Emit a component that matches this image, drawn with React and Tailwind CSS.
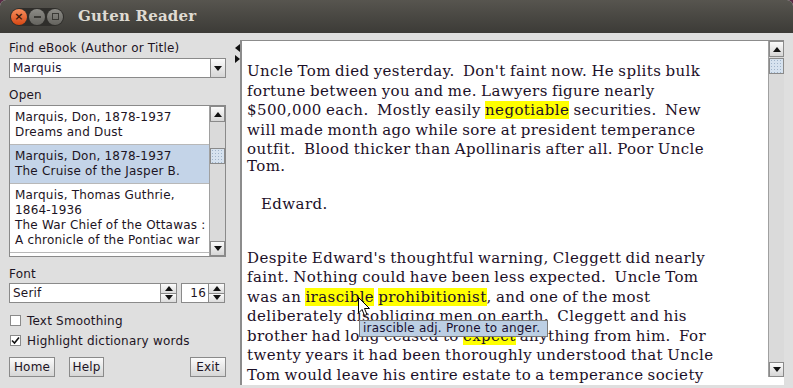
import React from "react";

// small arrow glyphs used by scrollbars, spinners and the combo box
const Up = () => (
  <svg width="8" height="5" viewBox="0 0 8 5"><path d="M0 5 L4 0 L8 5Z" fill="#111" /></svg>
);
const Down = () => (
  <svg width="8" height="5" viewBox="0 0 8 5"><path d="M0 0 L4 5 L8 0Z" fill="#111" /></svg>
);

const btn = "bg-linear-to-b from-[#fbfbfb] to-[#d6d6d6] border border-[#8a8a8a]";

function ScrollBar({ thumbTop, height }) {
  return (
    <div className="relative w-[16px] shrink-0 bg-[#dadada] border-l border-[#a0a0a0]" style={{ height }}>
      <div className={`${btn} h-[16px] flex items-center justify-center`}><Up /></div>
      <div
        className="absolute left-0 w-[15px] h-[16px] border border-[#8a8a8a] bg-[radial-gradient(#9fb3c9_0.7px,transparent_0.8px)] bg-[length:3px_3px] bg-[#d6e2ef]"
        style={{ top: thumbTop }}
      />
      <div className={`${btn} absolute bottom-0 left-0 w-[15px] h-[15px] flex items-center justify-center`}><Down /></div>
    </div>
  );
}

function Spinner() {
  return (
    <div className="w-[16px] flex flex-col border-l border-[#8a8a8a]">
      <div className="flex-1 flex items-center justify-center bg-linear-to-b from-[#fbfbfb] to-[#dcdcdc] border-b border-[#8a8a8a]"><Up /></div>
      <div className="flex-1 flex items-center justify-center bg-linear-to-b from-[#fbfbfb] to-[#dcdcdc]"><Down /></div>
    </div>
  );
}

const books = [
  { lines: ["Marquis, Don, 1878-1937", "Dreams and Dust"] },
  { lines: ["Marquis, Don, 1878-1937", "The Cruise of the Jasper B."], selected: true },
  { lines: ["Marquis, Thomas Guthrie,", "1864-1936", "The War Chief of the Ottawas :", "A chronicle of the Pontiac war"] },
  { lines: ["Marquis, Thomas Guthrie,", "1864-1936"] },
];

const Hi = ({ children }) => <span className="bg-[#ffff00]">{children}</span>;

export default function App() {
  return (
    <div className="relative w-[793px] h-[388px] overflow-hidden bg-[#5a2a45] font-['DejaVu_Sans',sans-serif] text-[12px] tracking-[0.2px] text-[#1d1424]">
      <div className="w-full h-full flex flex-col rounded-t-[6px] overflow-hidden bg-[#dfdfdf]">
        {/* TITLE BAR */}
        <div className="h-[33px] shrink-0 flex items-center bg-linear-to-b from-[#57554f] to-[#3c3b37]">
          <div className="ml-[10px] flex items-center gap-[2px] rounded-full bg-[#2f2e2b] p-[1px]">
            <div className="w-[16px] h-[16px] rounded-full bg-linear-to-b from-[#f68c5a] to-[#d6470e] flex items-center justify-center text-[11px] leading-none text-[#3a1a0c] font-bold">×</div>
            <div className="w-[16px] h-[16px] rounded-full bg-linear-to-b from-[#8c8b86] to-[#65645f] flex items-center justify-center">
              <div className="w-[7px] h-[2px] bg-[#3a3935]" />
            </div>
            <div className="w-[16px] h-[16px] rounded-full bg-linear-to-b from-[#8c8b86] to-[#65645f] flex items-center justify-center">
              <div className="w-[7px] h-[7px] border border-[#3a3935]" />
            </div>
          </div>
          <div className="ml-[14px] font-['DejaVu_Serif',serif] font-bold text-[15px] text-[#dfdbd2] tracking-[0.2px]">Guten Reader</div>
        </div>

        {/* BODY */}
        <div className="flex-1 flex">
          {/* LEFT PANEL */}
          <div className="w-[226px] shrink-0 pl-[9px] pt-[8px] flex flex-col">
            <div className="leading-[15px]">Find eBook (Author or Title)</div>
            <div className="mt-[2px] h-[20px] w-[217px] flex bg-white border border-[#8a8a8a]">
              <div className="flex-1 pl-[3px] leading-[18px] text-[#1a1030]">Marquis</div>
              <div className="w-[15px] flex items-center justify-center border-l border-[#8a8a8a] bg-linear-to-b from-[#fbfbfb] to-[#d6d6d6]"><Down /></div>
            </div>

            <div className="mt-[10px] leading-[15px]">Open</div>
            <div className="mt-[2px] h-[152px] w-[217px] flex bg-white border border-[#8a8a8a] overflow-hidden">
              <div className="flex-1 overflow-hidden">
                {books.map((b, i) => (
                  <div
                    key={i}
                    className={`px-[5px] py-[4px] border-b border-[#b8b8b8] leading-[15px] whitespace-nowrap ${b.selected ? "bg-[#c4d4e8]" : ""}`}
                  >
                    {b.lines.map((l, j) => <div key={j}>{l}</div>)}
                  </div>
                ))}
              </div>
              <ScrollBar thumbTop={42} height={150} />
            </div>

            <div className="mt-[10px] leading-[15px]">Font</div>
            <div className="mt-[1px] h-[20px] flex w-[217px]">
              <div className="w-[168px] flex bg-white border border-[#8a8a8a]">
                <div className="flex-1 pl-[3px] leading-[18px]">Serif</div>
                <Spinner />
              </div>
              <div className="ml-[4px] w-[44px] flex bg-white border border-[#8a8a8a]">
                <div className="flex-1 pr-[2px] text-right leading-[18px]">16</div>
                <Spinner />
              </div>
            </div>

            <div className="mt-[10px] h-[15px] flex items-center">
              <div className="w-[11px] h-[11px] ml-[1px] bg-white border border-[#8a8a8a]" />
              <span className="ml-[6px]">Text Smoothing</span>
            </div>
            <div className="mt-[5px] h-[15px] flex items-center">
              <div className="w-[11px] h-[11px] ml-[1px] bg-white border border-[#8a8a8a] flex items-center justify-center">
                <svg width="9" height="9" viewBox="0 0 9 9"><path d="M1 4.5 L3.5 7 L8 1.5" stroke="#111" strokeWidth="1.6" fill="none" /></svg>
              </div>
              <span className="ml-[6px]">Highlight dictionary words</span>
            </div>

            <div className="mt-[9px] w-[217px] flex">
              <div className={`${btn} h-[20px] w-[46px] flex items-center justify-center`}>Home</div>
              <div className={`${btn} ml-[14px] h-[20px] w-[35px] flex items-center justify-center`}>Help</div>
              <div className={`${btn} ml-auto h-[20px] w-[36px] flex items-center justify-center`}>Exit</div>
            </div>
          </div>

          {/* SPLITTER */}
          <div className="w-[14px] shrink-0 pt-[11px] flex flex-col items-end">
            <svg width="5" height="8" viewBox="0 0 5 8"><path d="M5 0 L0 4 L5 8Z" fill="#111" /></svg>
            <svg className="mt-[3px]" width="5" height="8" viewBox="0 0 5 8"><path d="M0 0 L5 4 L0 8Z" fill="#111" /></svg>
          </div>

          {/* TEXT PANE */}
          <div className="mt-[7px] mb-[11px] mr-[9px] flex-1 flex bg-white border-l-2 border-t border-[#8c8c8c] overflow-hidden">
            <div className="flex-1 overflow-hidden pl-[5px] pt-[21px] font-['DejaVu_Serif',serif] text-[15px] leading-[19.5px] tracking-[0.4px] [word-spacing:-1px] text-[#1c1028] whitespace-pre">
              <div>
                <div>Uncle Tom died yesterday.  Don't faint now. He splits bulk</div>
                <div>fortune between you and me. Lawyers figure nearly</div>
                <div>$500,000 each.  Mostly easily <Hi>negotiable</Hi> securities.  New</div>
                <div>will made month ago while sore at president temperance</div>
                <div>outfit.  Blood thicker than Apollinaris after all. Poor Uncle</div>
                <div className="-mt-[3px]">Tom.</div>
              </div>
              <div className="mt-[19px] pl-[14px]">Edward.</div>
              <div className="mt-[34px]">
                <div>Despite Edward's thoughtful warning, Cleggett did nearly</div>
                <div>faint. Nothing could have been less expected.  Uncle Tom</div>
                <div>was an <Hi>irascible</Hi> <Hi>prohibitionist</Hi>, and one of the most</div>
                <div>deliberately disobliging men on earth.  Cleggett and his</div>
                <div>brother had long ceased to <Hi>expect</Hi> anything from him.  For</div>
                <div>twenty years it had been thoroughly understood that Uncle</div>
                <div>Tom would leave his entire estate to a temperance society</div>
              </div>
            </div>
            <ScrollBar thumbTop={17} height={336} />
          </div>
        </div>
      </div>

      {/* TOOLTIP + CURSOR */}
      <div className="absolute left-[359px] top-[320px] w-[189px] h-[17px] bg-[#bccfe4] border border-[#7a7a7a] pl-[3px] leading-[15px] text-[12px] text-[#1a1030] whitespace-nowrap">
        irascible adj. Prone to anger.
      </div>
      <svg className="absolute left-[358px] top-[297px]" width="13" height="20" viewBox="0 0 13 20">
        <path d="M0.5 0.5 L0.5 16 L4 12.5 L6.5 18.5 L9 17.5 L6.5 11.5 L11.5 11.5 Z" fill="#fff" stroke="#000" strokeWidth="1" strokeLinejoin="round" />
      </svg>
    </div>
  );
}
